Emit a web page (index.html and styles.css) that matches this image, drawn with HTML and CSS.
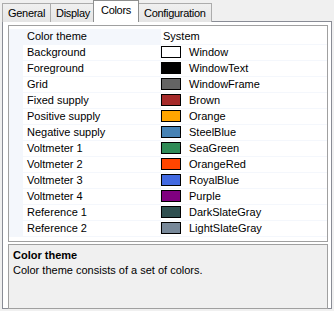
FILE: index.html
```html
<!doctype html>
<html>
  <head>
    <title>Options - Colors</title>
    <link rel="stylesheet" href="styles.css">
  </head>
  <body>
    <div class="tabs">
      <div class="tab">General</div>
      <div class="tab">Display</div>
      <div class="tab active">Colors</div>
      <div class="tab">Configuration</div>
    </div>

    <div class="tab-page">
      <div class="prop-grid">
        <div class="row selected">
          <div class="margin"></div>
          <div class="label">Color theme</div>
          <div class="value">System</div>
        </div>
        <div class="row">
          <div class="margin"></div>
          <div class="label">Background</div>
          <div class="value"><span class="swatch" style="background-color: #ffffff"></span>Window</div>
        </div>
        <div class="row">
          <div class="margin"></div>
          <div class="label">Foreground</div>
          <div class="value"><span class="swatch" style="background-color: #000000"></span>WindowText</div>
        </div>
        <div class="row">
          <div class="margin"></div>
          <div class="label">Grid</div>
          <div class="value"><span class="swatch" style="background-color: #646464"></span>WindowFrame</div>
        </div>
        <div class="row">
          <div class="margin"></div>
          <div class="label">Fixed supply</div>
          <div class="value"><span class="swatch" style="background-color: #a52a2a"></span>Brown</div>
        </div>
        <div class="row">
          <div class="margin"></div>
          <div class="label">Positive supply</div>
          <div class="value"><span class="swatch" style="background-color: #ffa500"></span>Orange</div>
        </div>
        <div class="row">
          <div class="margin"></div>
          <div class="label">Negative supply</div>
          <div class="value"><span class="swatch" style="background-color: #4682b4"></span>SteelBlue</div>
        </div>
        <div class="row">
          <div class="margin"></div>
          <div class="label">Voltmeter 1</div>
          <div class="value"><span class="swatch" style="background-color: #2e8b57"></span>SeaGreen</div>
        </div>
        <div class="row">
          <div class="margin"></div>
          <div class="label">Voltmeter 2</div>
          <div class="value"><span class="swatch" style="background-color: #ff4500"></span>OrangeRed</div>
        </div>
        <div class="row">
          <div class="margin"></div>
          <div class="label">Voltmeter 3</div>
          <div class="value"><span class="swatch" style="background-color: #4169e1"></span>RoyalBlue</div>
        </div>
        <div class="row">
          <div class="margin"></div>
          <div class="label">Voltmeter 4</div>
          <div class="value"><span class="swatch" style="background-color: #800080"></span>Purple</div>
        </div>
        <div class="row">
          <div class="margin"></div>
          <div class="label">Reference 1</div>
          <div class="value"><span class="swatch" style="background-color: #2f4f4f"></span>DarkSlateGray</div>
        </div>
        <div class="row">
          <div class="margin"></div>
          <div class="label">Reference 2</div>
          <div class="value"><span class="swatch" style="background-color: #778899"></span>LightSlateGray</div>
        </div>
      </div>

      <div class="description">
        <div class="desc-title">Color theme</div>
        <div class="desc-text">Color theme consists of a set of colors.</div>
      </div>
    </div>
  </body>
</html>
```

FILE: styles.css
```css
body {
  margin: 0;
  background-color: #f0f0f0;
  font-family: "Liberation Sans", Arial, sans-serif;
  font-size: 11px;
  color: #000;
}
.tabs {
  display: flex;
  align-items: flex-end;
  height: 22px;
  padding-left: 2px;
}
.tab {
  position: relative;
  height: 18px;
  line-height: 18px;
  padding: 0 5px;
  letter-spacing: -0.3px;
  border: 1px solid #acacac;
  border-bottom: none;
  margin-right: -1px;
  background: linear-gradient(#f0f0f0, #e5e5e5);
}
.tab.active {
  height: 21px;
  line-height: 19px;
  margin: 0 -1px 0 -2px;
  padding: 0 7px;
  background: #fff;
  z-index: 1;
  border-color: #8e8f8f;
}
.tab-page {
  margin: -1px 2px 0 2px;
  height: 283px;
  border: 1px solid #898c95;
  background-color: #fff;
  padding: 3px 3px 0 5px;
}
.prop-grid {
  height: 212px;
  border: 1px solid #a0a0a0;
  padding-top: 3px;
  background-color: #fff;
}
.row {
  display: flex;
  height: 15px;
  border-bottom: 1px solid #f4f7fc;
}
.margin {
  width: 14px;
  background-color: #f4f7fc;
}
.label {
  width: 133px;
  padding-left: 4px;
  line-height: 15px;
  border-right: 1px solid #f4f7fc;
  white-space: nowrap;
}
.row.selected .label {
  background-color: #f4f7fc;
}
.value {
  display: flex;
  align-items: flex-start;
  line-height: 15px;
  white-space: nowrap;
}
.row.selected .value {
  padding-left: 2px;
}
.swatch {
  width: 18px;
  height: 10px;
  margin: 1px 8px 0 0;
  border: 1px solid #000;
}
.description {
  margin-top: 2px;
  height: 57px;
  border: 1px solid #a0a0a0;
  background-color: #f0f0f0;
  padding: 3px 4px;
}
.desc-title {
  font-weight: bold;
  line-height: 15px;
}
.desc-text {
  line-height: 15px;
}
```
